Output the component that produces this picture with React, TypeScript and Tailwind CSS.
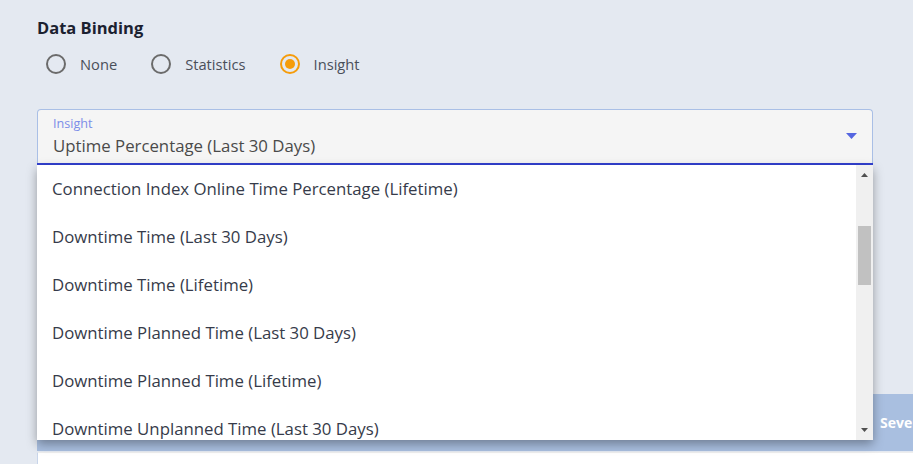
import React from "react";

const items = [
  "Connection Index Online Time Percentage (Lifetime)",
  "Downtime Time (Last 30 Days)",
  "Downtime Time (Lifetime)",
  "Downtime Planned Time (Last 30 Days)",
  "Downtime Planned Time (Lifetime)",
  "Downtime Unplanned Time (Last 30 Days)",
];

function Radio({ label, checked }: { label: string; checked?: boolean }) {
  return (
    <div className="flex items-center gap-[14px]">
      {checked ? (
        <div className="w-[20px] h-[20px] rounded-full border-2 border-[#f59c0b] flex items-center justify-center">
          <div className="w-[10px] h-[10px] rounded-full bg-[#f59c0b]" />
        </div>
      ) : (
        <div className="w-[20px] h-[20px] rounded-full border-2 border-[#6b6b6b]" />
      )}
      <span className="text-[14.7px] text-[#4a4f5a] leading-[20px]">{label}</span>
    </div>
  );
}

export default function App() {
  return (
    <div
      className="w-[913px] h-[464px] bg-[#e4e9f1] overflow-hidden relative"
      style={{ fontFamily: "'Open Sans', 'Noto Sans', sans-serif" }}
    >
      <div className="pl-[37px] pt-[17px]">
        <div className="text-[16.5px] font-bold text-[#1b2130] leading-[22px]">Data Binding</div>
        <div className="flex items-center mt-[15px] pl-[9px] gap-[34px] h-[20px]">
          <Radio label="None" />
          <Radio label="Statistics" />
          <Radio label="Insight" checked />
        </div>
        <div className="mt-[35px] w-[836px] h-[56px] bg-[#f5f5f5] border border-[#a9bfe6] border-b-0 rounded-t-[4px] relative flex flex-col">
          <div className="flex-1 pl-[15px] pr-[15px] flex items-center">
            <div className="flex-1 flex flex-col">
              <span className="text-[12.6px] leading-[16px] text-[#7b8de8] -mt-[1px]">Insight</span>
              <span className="text-[16.8px] leading-[22px] text-[#4a4a4a] mt-[3px]">Uptime Percentage (Last 30 Days)</span>
            </div>
            <svg width="11" height="7" viewBox="0 0 11 7">
              <path d="M0 0 H11 L5.5 6 Z" fill="#5566e0" />
            </svg>
          </div>
          <div className="h-[2px] bg-[#3241d1] -mx-px" />
        </div>
        <div className="mt-[229px] h-[57px] bg-[#a9bfe0] flex items-center">
          <span className="ml-[843px] text-[14px] font-bold text-white whitespace-nowrap">Sever</span>
        </div>
        <div className="mt-[1px] h-[20px] bg-white border-l border-[#c8d5ea] border-t border-t-[#eeeeee]" />
      </div>

      <div className="absolute left-[37px] top-[165px] w-[836px] h-[275px] bg-white flex shadow-[0_4px_10px_rgba(0,0,0,0.35)]">
        <div className="flex-1 flex flex-col">
          {items.map((t) => (
            <div key={t} className="h-[48px] shrink-0 pl-[15px] flex items-center text-[16.8px] text-[#363b4a]">
              {t}
            </div>
          ))}
        </div>
        <div className="w-[17px] bg-[#f0f0f0] flex flex-col items-center relative">
          <svg width="7" height="4" viewBox="0 0 7 4" className="absolute top-[8px] left-[5px]">
            <path d="M0 4 L3.5 0 L7 4 Z" fill="#505050" />
          </svg>
          <div className="absolute top-[61px] left-[2px] w-[13px] h-[59px] bg-[#c1c1c1]" />
          <svg width="7" height="4" viewBox="0 0 7 4" className="absolute bottom-[8px] left-[5px]">
            <path d="M0 0 L7 0 L3.5 4 Z" fill="#505050" />
          </svg>
        </div>
      </div>
    </div>
  );
}
